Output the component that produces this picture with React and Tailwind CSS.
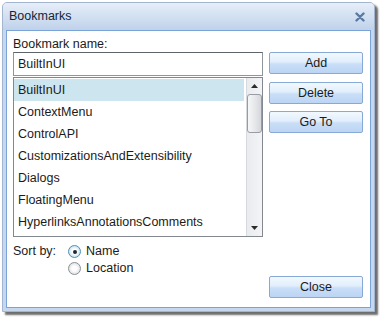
import React, { useState } from 'react';

const items = [
  'BuiltInUI',
  'ContextMenu',
  'ControlAPI',
  'CustomizationsAndExtensibility',
  'Dialogs',
  'FloatingMenu',
  'HyperlinksAnnotationsComments',
];

function Button({ children, className = '' }) {
  return (
    <div
      className={`flex h-[22px] w-[94px] items-center justify-center rounded-[2px] border border-[#86a9d6] bg-[linear-gradient(#f2f8fe_0%,#e1eefc_45%,#c9def7_55%,#bcd5f4_100%)] text-[12.5px] text-[#1b1b1b] ${className}`}
    >
      {children}
    </div>
  );
}

function Radio({ checked, label }) {
  return (
    <div className="flex h-[17px] items-center gap-[5px]">
      <div
        className={`flex h-[13px] w-[13px] items-center justify-center rounded-full border ${
          checked ? 'border-[#4f8fb4] bg-[radial-gradient(circle,#ffffff_30%,#c7e3ef_75%)]' : 'border-[#8c8f94] bg-[radial-gradient(circle,#ffffff_30%,#d8dadd_85%)]'
        }`}
      >
        {checked && <div className="h-[4px] w-[4px] rounded-full bg-[#1d2a35]" />}
      </div>
      <span>{label}</span>
    </div>
  );
}

export default function App() {
  const [selected, setSelected] = useState('BuiltInUI');
  const [sortBy] = useState('name');

  return (
    <div
      className="h-[317px] w-[382px] bg-white pl-[2px] pt-[2px] text-[12.5px] text-[#1b1b1b]"
      style={{ fontFamily: '"Liberation Sans", Tahoma, sans-serif' }}
    >
      {/* Window */}
      <div className="flex h-[310px] w-[373px] flex-col rounded-t-[5px] border border-[#a4b6cf] bg-[#c6d8ef] shadow-[3px_3px_2px_rgba(60,60,60,0.75)]">
        {/* Title bar */}
        <div className="flex h-[27px] items-center justify-between rounded-t-[4px] bg-[linear-gradient(#e6eef8,#bfd2eb)] pl-[6px] pr-[9px]">
          <span className="text-[12.5px] text-[#15253a]">Bookmarks</span>
          <svg width="10" height="10" viewBox="0 0 10 10">
            <path d="M1.5 1.5 L8.5 8.5 M8.5 1.5 L1.5 8.5" stroke="#5a7aa2" strokeWidth="2.4" strokeLinecap="round" />
          </svg>
        </div>

        {/* Body */}
        <div className="flex flex-1 px-[3px] pb-[3px]">
          <div className="flex flex-1 flex-col border border-[#7aa3d8] bg-white pl-[6px] pr-[7px] pt-[6px]">
            <div className="flex gap-[6px]">
              {/* Left column */}
              <div className="flex w-[250px] flex-col">
                <div className="h-[14px] leading-[14px]">Bookmark name:</div>
                <div className="mt-[1px] flex h-[24px] items-center border border-[#8e959d] border-t-[#5f656c] pl-[4px]">
                  BuiltInUI
                </div>
                <div className="mt-[1px] flex h-[160px] border border-[#828790]">
                  <div className="flex flex-1 flex-col pt-[1px]">
                    {items.map((item) => (
                      <div
                        key={item}
                        onClick={() => setSelected(item)}
                        className={`flex h-[22px] shrink-0 items-center pl-[4px] ${
                          selected === item ? 'mr-[2px] bg-[#cde5ee]' : ''
                        }`}
                      >
                        {item}
                      </div>
                    ))}
                  </div>
                  {/* Scrollbar */}
                  <div className="flex w-[16px] flex-col items-center border-l border-[#d6d9dd] bg-[linear-gradient(90deg,#e9ebee,#f3f4f6)]">
                    <div className="flex h-[16px] items-center justify-center">
                      <svg width="7" height="4" viewBox="0 0 7 4">
                        <path d="M3.5 0 L7 4 L0 4 Z" fill="#2b2b2b" />
                      </svg>
                    </div>
                    <div className="h-[39px] w-[15px] rounded-[3px] border border-[#979ca3] bg-[linear-gradient(90deg,#f7f7f8,#e3e5e8_60%,#d4d7db)]" />
                    <div className="flex-1" />
                    <div className="flex h-[16px] items-center justify-center">
                      <svg width="7" height="4" viewBox="0 0 7 4">
                        <path d="M0 0 L7 0 L3.5 4 Z" fill="#2b2b2b" />
                      </svg>
                    </div>
                  </div>
                </div>
              </div>

              {/* Right column */}
              <div className="flex flex-col pt-[15px]">
                <Button>Add</Button>
                <Button className="mt-[8px]">Delete</Button>
                <Button className="mt-[7px]">Go To</Button>
              </div>
            </div>

            {/* Bottom */}
            <div className="mt-[6px] flex justify-between">
              <div className="flex gap-[12px]">
                <span className="leading-[17px]">Sort by:</span>
                <div className="flex flex-col">
                  <Radio checked={sortBy === 'name'} label="Name" />
                  <Radio checked={sortBy === 'location'} label="Location" />
                </div>
              </div>
              <Button className="mt-[33px]">Close</Button>
            </div>
          </div>
        </div>
      </div>
    </div>
  );
}
